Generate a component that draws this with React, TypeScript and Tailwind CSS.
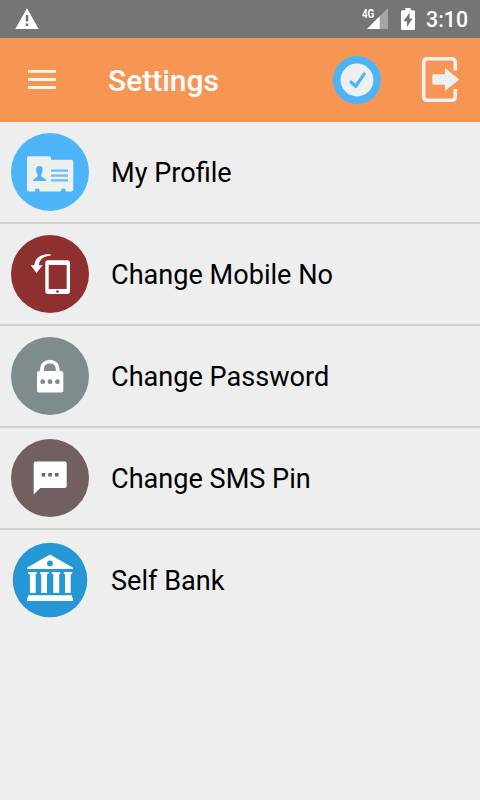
import type { ReactNode } from 'react';

type IconProps = { children: ReactNode };

function RowIcon({ children }: IconProps) {
  return (
    <svg viewBox="0 0 78 78" className="size-[78px] shrink-0">
      {children}
    </svg>
  );
}

function ProfileIcon() {
  return (
    <RowIcon>
      <circle cx="39" cy="39" r="39" fill="#4db5f7" />
      <path
        d="M17.500 23.300H38.500Q40 23.300 40 25V26.700H60.500Q62.300 26.700 62.300 28.500V56.800Q62.300 58.600 60.500 58.600H54.500V56.800Q54.500 55.500 52.300 55.500T50.100 56.800V58.600H28.500V56.800Q28.500 55.500 26.300 55.500T24.100 56.800V58.600H17.800Q16 58.600 16 56.800V25Q16 23.300 17.500 23.300Z"
        fill="#ecf0f1"
      />
      <path
        d="M28.400 33C31.500 33 32 35.500 31.500 38C31.100 40.300 30.200 41 30.200 42.500C30.200 45 35.300 45 35.300 48H22C22 45 26.800 45 26.800 42.500C26.800 41 25.700 40.300 25.300 38C24.900 35.500 25.400 33 28.400 33Z"
        fill="#4db5f7"
      />
      <path d="M40 37.600H57M40 42.600H57M40 47.400H57" stroke="#4db5f7" strokeWidth="2.300" strokeOpacity=".85" />
    </RowIcon>
  );
}

function MobileIcon() {
  return (
    <RowIcon>
      <circle cx="39" cy="39" r="39" fill="#8f3030" />
      <path
        fillRule="evenodd"
        d="M37 25.300H56.300Q59 25.300 59 28V56.300Q59 59 56.300 59H37Q34.300 59 34.300 56.300V28Q34.300 25.300 37 25.300ZM37.700 30V54H55.700V30Z"
        fill="#fff"
      />
      <circle cx="46.500" cy="56.500" r="1.300" fill="#8f3030" />
      <path d="M39.700 19.300C31 18.500 24 22 23.300 30.300H19.700L25.400 38L31.700 30.300H28C28.300 25 31 21.500 39.700 20.500Z" fill="#fff" />
    </RowIcon>
  );
}

function PasswordIcon() {
  return (
    <RowIcon>
      <circle cx="39" cy="39" r="39" fill="#7f8c8d" />
      <path d="M31 35V32.500C31 27.500 34.500 24.700 38.900 24.700S46.700 27.500 46.700 32.500V35" fill="none" stroke="#fff" strokeWidth="3.800" />
      <rect x="26" y="34" width="26.300" height="21.400" rx="2" fill="#fff" />
      <g fill="#7f8c8d">
        <circle cx="31.700" cy="44.700" r="2.400" />
        <circle cx="39" cy="44.700" r="2.400" />
        <circle cx="46.400" cy="44.700" r="2.400" />
      </g>
    </RowIcon>
  );
}

function SmsIcon() {
  return (
    <RowIcon>
      <circle cx="39" cy="39" r="39" fill="#725f5f" />
      <path d="M24.800 22.400H53.600Q55.700 22.400 55.700 24.500V47Q55.700 49 53.600 49H29.300L22.700 55.500V24.500Q22.700 22.400 24.800 22.400Z" fill="#fff" />
      <path d="M30.700 35.700H34.200M37.300 35.700H40.800M43.900 35.700H47.400" stroke="#725f5f" strokeWidth="3.500" />
    </RowIcon>
  );
}

function BankIcon() {
  return (
    <RowIcon>
      <circle cx="39" cy="39" r="37.300" fill="#2597d5" />
      <path d="M39 13.500L62 26.700V28H16V26.700Z" fill="#fff" />
      <circle cx="39" cy="22.400" r="2.900" fill="#2597d5" />
      <path
        d="M17 31H25.700V32.500L24.700 33.500V52H18.900V33.500L17 32.500ZM29 31H37.700V32.500L36 33.500V52H30.200V33.500L29 32.500ZM40.700 31H49.300V32.500L48.200 33.500V52H42.300V33.500L40.700 32.500ZM52.700 31H61.300V32.500L59.700 33.500V52H54V33.500L52.700 32.500Z"
        fill="#fff"
      />
      <path d="M17 54.300H61V56.500L62 57V60H16V57L17 56.500Z" fill="#fff" />
    </RowIcon>
  );
}

const items = [
  { label: 'My Profile', icon: <ProfileIcon /> },
  { label: 'Change Mobile No', icon: <MobileIcon /> },
  { label: 'Change Password', icon: <PasswordIcon /> },
  { label: 'Change SMS Pin', icon: <SmsIcon /> },
  { label: 'Self Bank', icon: <BankIcon /> },
];

function StatusBar() {
  return (
    <div className="flex h-[38px] items-center bg-[#757575] pr-[12px] pl-[15px] text-white">
      <svg viewBox="0 0 24 22" className="h-[22px] w-[24px]">
        <path fillRule="evenodd" d="M12 .3L23.700 21H.300ZM10.700 7V13.500H13.300V7ZM10.700 15.500V18H13.300V15.500Z" fill="#fff" />
      </svg>
      <svg viewBox="0 -5 26 32" className="ml-auto h-[32px] w-[26px]">
        <path d="M26 0V21H5Z" fill="#fff" fillOpacity=".35" />
        <path d="M17.700 8.300V21H5Z" fill="#fff" />
        <text x="0" y="10" textLength="12.300" lengthAdjust="spacingAndGlyphs" className="font-['Roboto',sans-serif] text-[13px] font-bold" fill="#fff">
          4G
        </text>
      </svg>
      <svg viewBox="0 0 14 22" className="ml-[13px] h-[22px] w-[14px]">
        <path
          fillRule="evenodd"
          d="M4.300 0H9.700V2.200H12.500Q14 2.200 14 3.700V20.500Q14 22 12.500 22H1.500Q0 22 0 20.500V3.700Q0 2.200 1.500 2.200H4.300ZM8.600 4.500L2.400 13.300H6V18.900L11.600 10.600H8.600Z"
          fill="#fff"
        />
      </svg>
      <span className="ml-[11px] pt-[1px] text-[21.300px] leading-none font-medium">3:10</span>
    </div>
  );
}

function Header() {
  return (
    <header className="flex h-[84px] items-center bg-[#f79654] pr-[15px] pl-[28px]">
      <svg viewBox="0 0 28 22" className="h-[22px] w-[28px]">
        <path d="M0 2.400H28M0 10.500H28M0 18.500H28" stroke="#fff" strokeWidth="2.800" strokeOpacity=".92" />
      </svg>
      <h1 className="ml-[52px] pt-[2px] text-[30px] leading-none font-medium text-white">Settings</h1>
      <svg viewBox="0 0 48 48" className="ml-auto size-[48px]">
        <circle cx="24" cy="24" r="24" fill="#4db5f7" />
        <circle cx="24" cy="24" r="16.400" fill="#ecf0f1" />
        <path d="M18 26L22.700 30.300L31.200 18" fill="none" stroke="#4db5f7" strokeWidth="3.200" strokeLinecap="round" strokeLinejoin="round" />
      </svg>
      <svg viewBox="0 0 48 48" className="ml-[36px] size-[48px]">
        <path
          d="M38.300 14.500V6.500Q38.300 2.700 34.500 2.700H10.500Q6.700 2.700 6.700 6.500V40.500Q6.700 44.300 10.500 44.300H34.500Q38.300 44.300 38.300 40.500V33"
          fill="none"
          stroke="#ecf0f1"
          strokeWidth="3.600"
        />
        <path d="M16.800 18.300H28V12L42.300 23.500L28 35V28.700H16.800Q15.300 28.700 15.300 27.200V19.800Q15.300 18.300 16.800 18.300Z" fill="#ecf0f1" />
      </svg>
    </header>
  );
}

export default function App() {
  return (
    <div className="flex h-[800px] w-[480px] flex-col overflow-hidden bg-[#eeeeee] font-['Roboto',sans-serif]">
      <StatusBar />
      <Header />
      <ul className="divide-y-2 divide-[#d0d0d0]">
        {items.map((item) => (
          <li key={item.label} className="flex items-center gap-[22px] px-[11px] py-[11px] text-[27.100px] leading-none text-black">
            {item.icon}
            <span className="pt-[3px]">{item.label}</span>
          </li>
        ))}
      </ul>
    </div>
  );
}
